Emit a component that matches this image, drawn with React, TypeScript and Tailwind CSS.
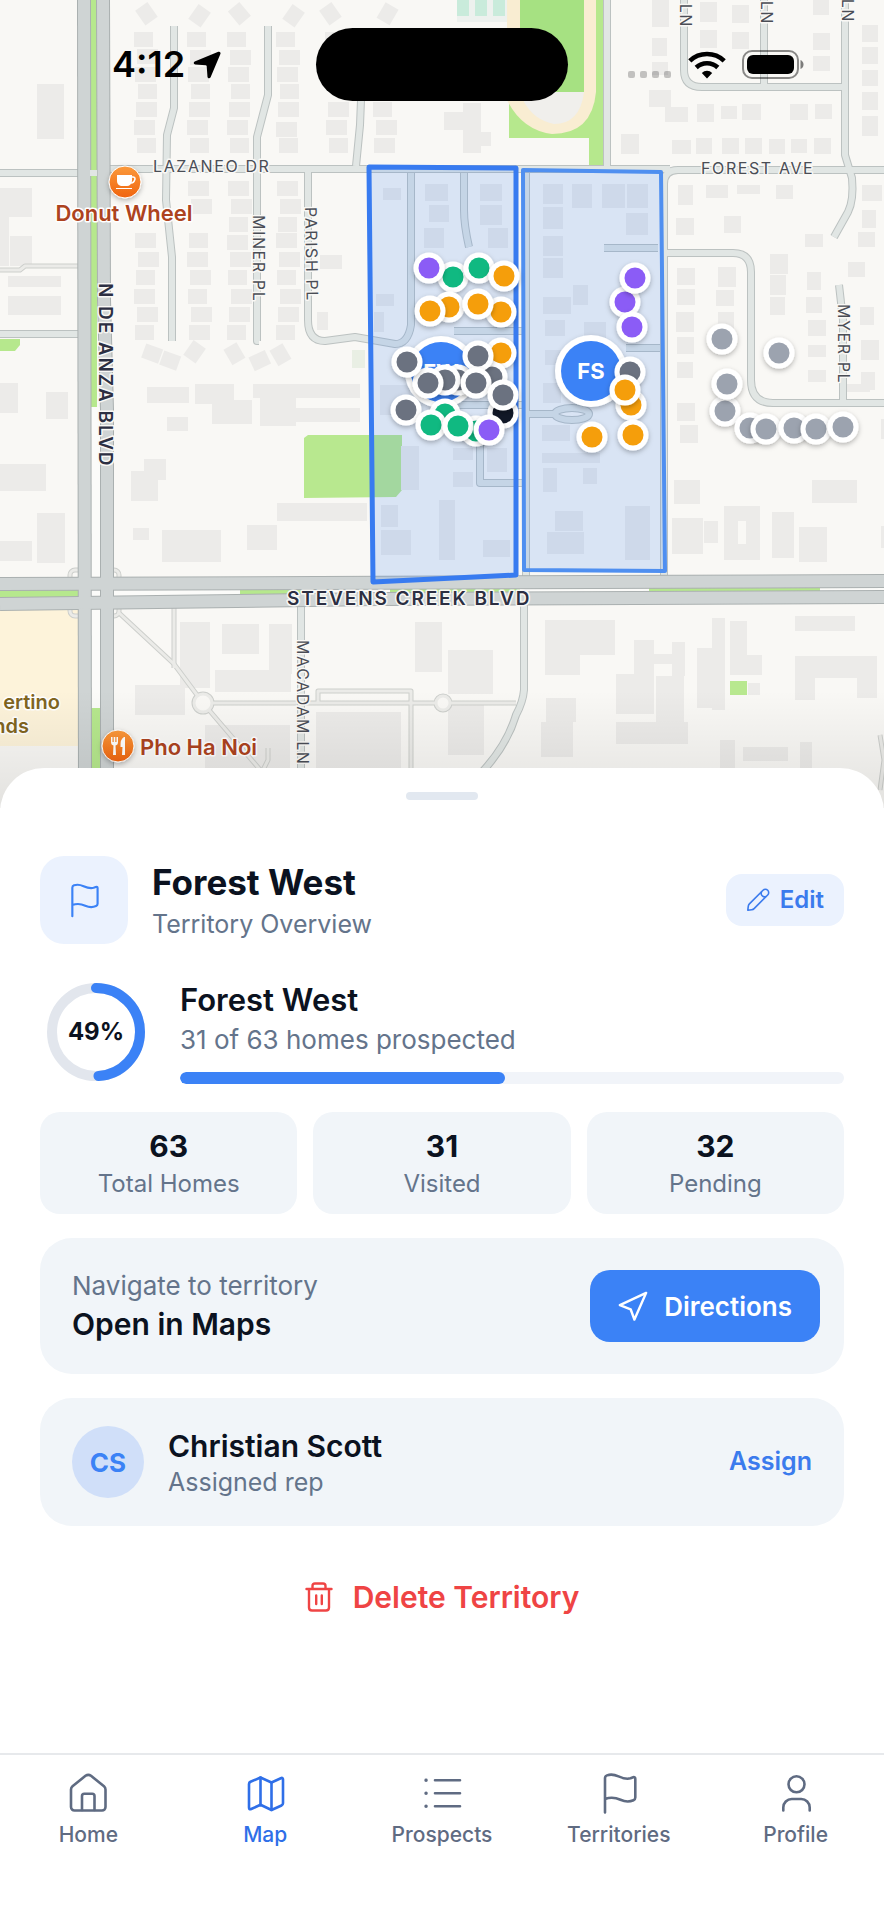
import type { ReactNode } from "react";

// x, y, width, height of every building footprint on the map
const BUILDINGS = [
  [37, 84, 27, 55], [0, 188, 32, 29], [10, 236, 22, 30], [0, 217, 9, 49], [8, 276, 53, 11], [8, 296, 53, 19],
  [320, 255, 22, 14], [317, 312, 11, 18], [0, 383, 18, 30], [46, 392, 22, 27], [0, 464, 46, 27],
  [37, 513, 28, 50], [0, 541, 32, 20], [147, 387, 42, 16], [167, 417, 21, 14], [195, 384, 39, 20],
  [212, 400, 40, 24], [253, 384, 107, 14], [260, 398, 36, 28], [296, 408, 64, 14], [131, 471, 27, 30], [144, 459, 22, 21],
  [162, 530, 59, 32], [247, 525, 30, 25], [277, 503, 90, 18], [133, 528, 16, 12], [180, 622, 30, 66],
  [222, 624, 37, 30], [269, 624, 23, 50], [215, 670, 76, 22], [135, 685, 50, 30], [415, 622, 27, 50],
  [316, 712, 85, 60], [205, 725, 85, 45], [383, 188, 18, 12], [425, 184, 23, 17], [429, 205, 20, 17],
  [424, 228, 20, 20], [480, 184, 22, 17], [480, 205, 22, 20], [488, 228, 20, 20], [376, 294, 18, 12],
  [374, 312, 10, 20], [380, 385, 30, 30], [401, 446, 18, 44], [381, 505, 17, 22], [381, 530, 30, 25],
  [439, 500, 16, 60], [483, 540, 27, 17], [453, 472, 20, 15], [453, 448, 20, 12], [487, 448, 20, 24], [543, 184, 20, 20], [572, 184, 20, 24],
  [602, 184, 23, 24], [627, 184, 21, 24], [543, 207, 20, 22], [626, 213, 22, 22], [543, 236, 20, 20],
  [543, 258, 20, 20], [573, 285, 15, 20], [543, 297, 28, 17], [545, 320, 20, 16], [584, 322, 22, 16],
  [545, 350, 18, 15], [543, 383, 18, 20], [542, 425, 28, 16], [542, 453, 58, 10], [543, 468, 14, 24],
  [583, 468, 14, 16], [555, 511, 28, 20], [547, 532, 37, 22], [625, 506, 25, 54], [678, 185, 15, 20],
  [706, 185, 22, 13], [737, 185, 23, 9], [776, 185, 17, 14], [676, 218, 18, 17], [724, 216, 17, 17],
  [677, 268, 18, 17], [677, 289, 18, 16], [676, 312, 18, 20], [677, 337, 17, 17], [677, 362, 16, 16],
  [718, 267, 18, 20], [716, 290, 18, 16], [718, 312, 16, 18], [770, 254, 18, 20], [770, 275, 16, 20],
  [770, 297, 15, 18], [805, 234, 18, 13], [807, 272, 14, 18], [806, 297, 16, 16], [808, 320, 18, 16],
  [808, 345, 18, 12], [808, 370, 18, 12], [862, 185, 20, 16], [862, 210, 14, 18], [858, 232, 17, 15], [848, 262, 17, 15], [860, 307, 14, 18],
  [861, 340, 18, 20], [861, 372, 14, 18], [652, 0, 17, 27], [652, 38, 15, 18], [652, 62, 16, 13],
  [649, 90, 22, 17], [665, 107, 23, 15], [697, 104, 17, 18], [721, 106, 16, 13], [742, 104, 19, 16],
  [790, 104, 18, 16], [815, 104, 17, 15], [621, 134, 18, 20], [672, 140, 19, 14], [696, 138, 16, 16],
  [722, 138, 17, 16], [745, 138, 17, 16], [769, 139, 16, 15], [791, 139, 16, 14], [814, 138, 17, 16],
  [700, 2, 17, 20], [700, 30, 17, 18], [732, 5, 17, 18], [732, 32, 17, 17], [813, 0, 16, 15],
  [813, 33, 17, 17], [813, 56, 17, 15], [862, 25, 16, 17], [862, 47, 16, 17], [862, 70, 16, 16],
  [862, 92, 16, 18], [862, 116, 16, 20], [463, 103, 18, 50], [444, 112, 19, 18], [481, 132, 10, 14],
  [674, 480, 26, 24], [672, 518, 31, 36], [704, 521, 14, 22], [724, 506, 14, 54], [746, 506, 14, 54],
  [738, 506, 8, 15], [738, 544, 8, 16], [772, 512, 22, 46], [812, 480, 45, 23], [799, 527, 28, 35],
  [677, 403, 18, 18], [680, 425, 18, 18], [840, 384, 30, 8], [545, 620, 70, 35], [545, 655, 35, 20], [634, 640, 20, 34],
  [672, 642, 13, 34], [648, 654, 24, 10], [616, 674, 38, 40], [656, 676, 28, 46], [616, 722, 72, 22],
  [712, 618, 13, 92], [697, 648, 15, 60], [730, 621, 17, 54], [747, 655, 15, 20], [748, 683, 12, 12],
  [795, 616, 60, 15], [795, 656, 20, 44], [815, 656, 42, 22], [857, 656, 20, 42], [546, 698, 30, 24],
  [541, 722, 32, 35], [720, 740, 15, 30], [743, 747, 45, 14], [800, 742, 12, 28], [448, 650, 45, 44],
  [448, 705, 36, 50], [881, 419, 10, 20], [881, 526, 10, 22],
];

// Rows of houses along the north-south streets
const HOUSE_COLUMNS = [
  { x: 134, rows: [32, 49, 67, 84, 102, 120, 138, 233, 252, 270, 289, 307, 325] },
  { x: 187, rows: [32, 50, 67, 84, 102, 120, 138, 181, 199, 233, 252, 270, 289, 307, 325] },
  { x: 227, rows: [32, 50, 67, 84, 102, 120, 138, 181, 199, 217, 235, 252, 270, 289, 307, 325] },
  { x: 276, rows: [32, 50, 67, 84, 102, 122, 138, 181, 199, 217, 233, 252, 270, 289, 307, 325] },
  { x: 325, rows: [32, 102, 120, 138] },
  { x: 373, rows: [102, 120, 138] },
];

// Corner houses turned to face the ends of the streets: cx, cy, angle
const CORNER_HOUSES = [
  [146, 14, 55], [200, 16, -55], [239, 14, 50], [294, 16, -55], [330, 14, 55], [388, 14, -60],
  [152, 354, 20], [170, 361, 20], [195, 352, -55], [234, 354, 60], [260, 361, -25], [280, 355, 60],
];

const STREETS = [
  "M0 173H78", "M109 169H670", "M664 575V184Q664 170 678 170H884",
  "M174 26V108L167 135L166 200L172 257V341", "M268 26V95L257 137V341H259",
  "M361 100L360 125L356 166", "M308 171V320Q308 341 325 341L355 337L395 344Q408 344 411 325L411 173",
  "M464 173V210Q464 225 469 247", "M607 0V168", "M684 0V70Q684 87 702 87H845", "M764 0V87",
  "M845 0V155L852 178Q854 200 848 212L834 237", "M604 248H658", "M666 253H733Q751 253 751 272V380Q751 403 773 403H884",
  "M839 285L843 320V403", "M526 173V576", "M524 604V690Q523 702 516 715Q507 745 482 772",
  "M454 331H523", "M626 348H660", "M529 414H556", "M480 440V483H523", "M440 405H522",
  "M301 604V800", "M0 334H78",
];

const PATHS = [
  "M118 612L174 664L203 703L262 772", "M174 608V668", "M203 703H516", "M318 702V691H411V800",
  "M0 270H20L25 266H78", "M262 772L268 760V748", "M880 735L884 760L880 790",
];

const PIN = {
  purple: "#8b5cf6",
  green: "#10b981",
  orange: "#f59e0b",
  slate: "#6b7280",
  black: "#111827",
  gray: "#9ca3af",
};

const PINS: [number, number, keyof typeof PIN][] = [
  [453, 277, "green"], [429, 268, "purple"], [479, 268, "green"], [504, 276, "orange"],
  [449, 307, "orange"], [430, 311, "orange"], [501, 312, "orange"], [478, 304, "orange"],
  [501, 353, "orange"], [492, 377, "slate"], [458, 380, "slate"], [445, 380, "slate"],
  [428, 383, "slate"], [407, 362, "slate"], [478, 356, "slate"], [476, 383, "slate"],
  [503, 413, "black"], [503, 395, "slate"], [406, 410, "slate"], [445, 414, "green"],
  [431, 425, "green"], [476, 431, "green"], [458, 426, "green"], [489, 430, "purple"],
  [625, 302, "purple"], [635, 278, "purple"], [632, 327, "purple"], [630, 372, "slate"],
  [631, 405, "orange"], [625, 390, "orange"], [592, 437, "orange"], [633, 435, "orange"],
  [722, 339, "gray"], [779, 353, "gray"], [725, 411, "gray"], [727, 384, "gray"],
  [750, 428, "gray"], [766, 429, "gray"], [794, 428, "gray"], [816, 429, "gray"], [843, 427, "gray"],
];

function TerritoryBadge({ x, y, label }: { x: number; y: number; label: string }) {
  return (
    <g>
      <circle cx={x} cy={y} r={36} fill="#fff" filter="url(#pin-shadow)" />
      <circle cx={x} cy={y} r={30} fill="#3b82f6" />
      <text x={x} y={y + 8} textAnchor="middle" className="fill-white text-[22px] font-bold">{label}</text>
    </g>
  );
}

function TerritoryMap() {
  return (
    <svg
      viewBox="0 0 884 808"
      preserveAspectRatio="xMidYMin slice"
      className="block h-[808px] w-full bg-[#f9f8f5]"
      role="img"
      aria-label="Territory map"
    >
      <defs>
        <linearGradient id="poi" x1="0" y1="0" x2="0" y2="1">
          <stop offset="0" stopColor="#fb9a3c" />
          <stop offset="1" stopColor="#f0640f" />
        </linearGradient>
        <linearGradient id="sheet-shade" x1="0" y1="0" x2="0" y2="1">
          <stop offset="0" stopColor="#000" stopOpacity="0" />
          <stop offset="1" stopColor="#000" stopOpacity="0.09" />
        </linearGradient>
        <filter id="pin-shadow" x="-30%" y="-30%" width="160%" height="170%">
          <feDropShadow dx="0" dy="2" stdDeviation="2.5" floodOpacity="0.28" />
        </filter>
      </defs>

      {/* Land use */}
      <path d="M0 610H79V746H0Z" fill="#fdf3da" />
      <path d="M0 339H20V345L15 351H0Z" fill="#b6e88d" />
      <path d="M509 0H604V167H589V138H509Z" fill="#b6e88d" />
      <path d="M507 0H596V92Q592 134 552 134Q522 130 507 100Z" fill="#f9edd2" />
      <path d="M520 0H584V92H520Z" fill="#a6e182" />
      <path d="M524 92H584Q580 124 554 124Q534 120 524 102Z" fill="#f0efec" />
      <path d="M457 0H507V22H457Z" fill="#edf1ee" />
      <path d="M457 0H469V16H457ZM475 0H487V16H475ZM493 0H505V16H493Z" fill="#c9ebdb" />
      <path d="M304 438L308 435H402V490L396 497L304 498Z" fill="#b8e88f" />

      <g fill="#ecebe9">
        {BUILDINGS.map(([x, y, width, height]) => (
          <rect key={`${x}-${y}`} x={x} y={y} width={width} height={height} />
        ))}
        {HOUSE_COLUMNS.map((column) =>
          column.rows.map((y, i) => (
            <rect key={`${column.x}-${y}`} x={column.x + ((i * 3) % 5)} y={y} width={i % 3 ? 21 : 19} height={15} />
          ))
        )}
        {CORNER_HOUSES.map(([x, y, angle]) => (
          <rect key={`${x}-${y}`} x={x - 9} y={y - 8} width={18} height={15} transform={`rotate(${angle} ${x} ${y})`} />
        ))}
      </g>
      <rect x={730} y={681} width={17} height={14} fill="#b8e88f" />
      <rect x={352} y={350} width={13} height={18} fill="#e9efe4" />

      {/* Side streets */}
      <g fill="none" strokeLinejoin="round">
        <g stroke="#cdcfcc" strokeWidth={5}>
          {PATHS.map((d) => <path key={d} d={d} />)}
          <circle cx={203} cy={703} r={9} />
          <circle cx={443} cy={703} r={7} />
          <rect x={70} y={570} width={49} height={46} rx={5} />
        </g>
        <g stroke="#ebebe8" strokeWidth={3}>
          {PATHS.map((d) => <path key={d} d={d} />)}
          <circle cx={203} cy={703} r={9} fill="#f9f8f5" />
          <circle cx={443} cy={703} r={7} fill="#f9f8f5" />
          <rect x={70} y={570} width={49} height={46} rx={5} />
        </g>
        <g stroke="#bcc2c1" strokeWidth={8}>
          {STREETS.map((d) => <path key={d} d={d} />)}
          <ellipse cx={572} cy={414} rx={17} ry={6} />
        </g>
        <g stroke="#e1e6e4" strokeWidth={6}>
          {STREETS.map((d) => <path key={d} d={d} />)}
          <ellipse cx={572} cy={414} rx={17} ry={6} />
        </g>
      </g>

      {/* Boulevards with their medians */}
      <path d="M90 0H97V407H91Z" fill="#b6e88d" />
      <path d="M91 407H100V577H91Z" fill="#fbfbf9" />
      <path d="M91 609H101V708H91Z" fill="#fbfbf9" />
      <path d="M91 708H101V808H91Z" fill="#b6e88d" />
      <path d="M0 590L884 586V594L0 598Z" fill="#fbfbf9" />
      <path d="M0 590H79V598H0ZM240 589H310V596H240ZM390 588H520V594H390ZM649 587H820V593H649Z" fill="#b6e88d" />
      <g fill="none">
        <g stroke="#aab0b0" strokeWidth={14}>
          <path d="M84 0L85 808" />
          <path d="M103 0L104 300L107 410V808" />
          <path d="M0 584L884 581" />
          <path d="M0 604L380 599L884 597" />
        </g>
        <g stroke="#cfd4d4" strokeWidth={12}>
          <path d="M84 0L85 808" />
          <path d="M103 0L104 300L107 410V808" />
          <path d="M0 584L884 581" />
          <path d="M0 604L380 599L884 597" />
        </g>
      </g>
      <path d="M90 173H97" stroke="#e1e6e4" strokeWidth={6} />

      {/* Territories */}
      <g fill="#3b82f6" fillOpacity={0.17} strokeLinejoin="round">
        <path d="M523 170L661 172L665 571L524 570Z" stroke="#4f8ff0" strokeWidth={4} />
        <path d="M369 167L516 168V575L373 582Z" stroke="#387bf0" strokeWidth={5} />
      </g>

      {/* Street names */}
      <g className="fill-[#4a4d55] text-[16px] tracking-widest" stroke="#f9f8f5" strokeWidth={3} paintOrder="stroke" strokeLinejoin="round">
        <text x={153} y={172}>LAZANEO DR</text>
        <text x={701} y={174}>FOREST AVE</text>
        <text transform="translate(253 215) rotate(90)">MINER PL</text>
        <text transform="translate(305 207) rotate(89)">PARISH PL</text>
        <text transform="translate(838 304) rotate(90)">MYER PL</text>
        <text transform="translate(297 640) rotate(90)">MACADAM LN</text>
        <text transform="translate(680 28) rotate(90)" textAnchor="end">LN</text>
        <text transform="translate(761 25) rotate(90)" textAnchor="end">LN</text>
        <text transform="translate(842 23) rotate(90)" textAnchor="end">LN</text>
      </g>
      <g className="fill-[#2c2f42] text-[19px] font-semibold tracking-widest" stroke="#f9f8f5" strokeWidth={3} paintOrder="stroke" strokeLinejoin="round">
        <text x={287} y={605}>STEVENS CREEK BLVD</text>
        <text transform="translate(99 283) rotate(90)">N DE ANZA BLVD</text>
      </g>

      {/* Places */}
      <g className="fill-[#ad4320] text-[22px] font-semibold" stroke="#fff" strokeWidth={3} paintOrder="stroke" strokeLinejoin="round">
        <text x={124} y={221} textAnchor="middle">Donut Wheel</text>
        <text x={140} y={755}>Pho Ha Noi</text>
      </g>
      <g className="fill-[#80651f] text-[20px] font-semibold" stroke="#fff" strokeWidth={3} paintOrder="stroke" strokeLinejoin="round">
        <text x={60} y={709} textAnchor="end">ertino</text>
        <text x={29} y={733} textAnchor="end">nds</text>
      </g>
      <g filter="url(#pin-shadow)">
        <circle cx={125} cy={182} r={16} fill="url(#poi)" stroke="#fff" strokeWidth={1} />
        <circle cx={118} cy={746} r={16} fill="url(#poi)" stroke="#fff" strokeWidth={1} />
      </g>
      <path d="M117 175H132V181Q131 186 127 186H121Q117 185 117 181ZM116 188H132V189H116Z" fill="#fff" />
      <path d="M132 177H133Q135 177 135 179Q134 183 131 183" fill="none" stroke="#fff" strokeWidth={1.5} />
      <path d="M111 737V742Q111 745 113.5 745.5L113 755H116L115.5 745.5Q118 745 118 742V737H116.5V742H115.3V737H113.7V742H112.5V737ZM124 737Q120 739 120.5 747H122.5L122 755H125V737Z" fill="#fff" />

      <TerritoryBadge x={441} y={372} label="FW" />
      <TerritoryBadge x={591} y={371} label="FS" />
      {PINS.map(([x, y, color]) => (
        <g key={`${x}-${y}`}>
          <circle cx={x} cy={y} r={15.5} fill="#fff" filter="url(#pin-shadow)" />
          <circle cx={x} cy={y} r={10.5} fill={PIN[color]} />
        </g>
      ))}

      <rect x={0} y={690} width={884} height={118} fill="url(#sheet-shade)" />
    </svg>
  );
}

function StatusBar() {
  return (
    <div className="absolute inset-x-0 top-0 grid grid-cols-[1fr_auto_1fr] items-center px-20 pt-7 text-black">
      <div className="flex items-center gap-2 pl-8">
        <span className="text-[36px] leading-[73px] font-semibold">4:12</span>
        <svg width="28" height="28" viewBox="0 0 28 28" fill="currentColor" aria-hidden="true">
          <path d="M25.3.8C26.8.2 28 1.4 27.4 2.9L17.6 26.2C17 27.7 14.8 27.5 14.5 25.9L13.7 15.2C13.6 14.6 13.3 14.3 12.7 14.2L2.2 13.5C.5 13.3.2 11.2 1.7 10.5Z" />
        </svg>
      </div>
      <div className="h-[73px] w-[252px] rounded-full bg-black" />
      <div className="flex items-center justify-end gap-4">
        <svg width="44" height="28" viewBox="0 0 44 28" fill="#000" fillOpacity={0.22} aria-hidden="true">
          <rect x="0" y="20" width="7" height="7" rx="2" />
          <rect x="12" y="20" width="7" height="7" rx="2" />
          <rect x="24" y="20" width="7" height="7" rx="2" />
          <rect x="36" y="20" width="7" height="7" rx="2" />
        </svg>
        <svg width="38" height="28" viewBox="0 0 38 28" fill="none" stroke="currentColor" strokeWidth={4.6} aria-hidden="true">
          <path d="M1.8 9.8Q9 3 19 3T36.2 9.8" />
          <path d="M8.2 16.5Q12.8 12.2 19 12.2T29.8 16.5" />
          <path d="M19 27.5L13.8 22Q16 19.8 19 19.8T24.2 22Z" fill="currentColor" stroke="none" />
        </svg>
        <svg width="62" height="29" viewBox="0 0 62 29" aria-hidden="true">
          <rect x="1" y="1" width="55" height="27" rx="9" fill="none" stroke="#000" strokeOpacity={0.45} strokeWidth={2} />
          <rect x="5" y="5" width="47" height="19" rx="6" />
          <path d="M58.5 10Q61.5 11.5 61.5 14.5T58.5 19Z" fillOpacity={0.5} />
        </svg>
      </div>
    </div>
  );
}

function Icon({ size = 48, children }: { size?: number; children: ReactNode }) {
  return (
    <svg
      width={size}
      height={size}
      viewBox="0 0 48 48"
      fill="none"
      stroke="currentColor"
      strokeWidth={2.6}
      strokeLinecap="round"
      strokeLinejoin="round"
      aria-hidden="true"
    >
      {children}
    </svg>
  );
}

const flagPath = (
  <path d="M10 43.5V9.2C10 7.7 10.7 6.9 12 6.4C15.5 5.1 19.5 5.6 23.5 7.4C28 9.4 31.5 10.4 35.5 9.3L38.2 8.3C39.3 7.9 40.3 8.5 40.3 9.7V28.5C40.3 29.8 39.7 30.7 38.5 31.2C34.5 33 29.5 32.6 25.5 30.8C20.5 28.5 16 27.8 10 30" />
);

const TABS = [
  {
    label: "Home",
    icon: (
      <>
        <path d="M7 20.5V38A3.5 3.5 0 0 0 10.5 41.5H38A3.5 3.5 0 0 0 41.5 38V20.5Q41.5 18.6 40 17.3L27 6.8Q24.3 4.8 21.5 6.8L8.5 17.3Q7 18.6 7 20.5Z" />
        <path d="M18 41V27A2.3 2.3 0 0 1 20.3 24.7H28.2A2.3 2.3 0 0 1 30.5 27V41" />
      </>
    ),
  },
  {
    label: "Map",
    active: true,
    icon: (
      <>
        <path d="M19.5 8.5L9.5 12.8Q8 13.5 8 15V38.5Q8 41 10.2 40L19.5 35.8L30.5 41L40.5 36.5Q42 35.8 42 34.3V10.5Q42 8.2 39.8 9.2L30.5 13.5Z" />
        <path d="M19.5 8.5V35.8M30.5 13.5V41" />
      </>
    ),
  },
  {
    label: "Prospects",
    icon: (
      <>
        <path d="M17 11.3H42M17 24.3H42M17 37.3H42" />
        <path d="M8 11.3H8.1M8 24.3H8.1M8 37.3H8.1" strokeWidth={3.4} />
      </>
    ),
  },
  { label: "Territories", icon: flagPath },
  {
    label: "Profile",
    icon: (
      <>
        <circle cx="24.5" cy="15.3" r="8" />
        <path d="M11.3 41.5V38.5A8.5 8.5 0 0 1 19.8 30H29.2A8.5 8.5 0 0 1 37.7 38.5V41.5" />
      </>
    ),
  },
];

const STATS = [
  { value: 63, label: "Total Homes" },
  { value: 31, label: "Visited" },
  { value: 32, label: "Pending" },
];

function ProgressRing({ percent }: { percent: number }) {
  const circumference = 2 * Math.PI * 44;
  return (
    <div className="relative flex size-28 shrink-0 items-center justify-center">
      <svg viewBox="0 0 112 112" className="absolute inset-0 -rotate-90" fill="none" strokeWidth={10} aria-hidden="true">
        <circle cx="56" cy="56" r="44" stroke="#e2e6ed" />
        <circle
          cx="56"
          cy="56"
          r="44"
          stroke="#3b82f6"
          strokeLinecap="round"
          strokeDasharray={`${(circumference * percent) / 100} ${circumference}`}
        />
      </svg>
      <span className="relative text-2xl font-bold text-[#0b1220]">{percent}%</span>
    </div>
  );
}

export default function App() {
  const visited = 31;
  const total = 63;
  const percent = Math.round((visited / total) * 100);

  return (
    <div className="flex min-h-screen flex-col bg-white font-[Inter,sans-serif]">
      <header className="relative">
        <TerritoryMap />
        <StatusBar />
      </header>

      {/* Bottom sheet */}
      <main className="relative -mt-10 flex flex-1 flex-col rounded-t-[44px] bg-white px-10 pt-6 text-[#0b1220]">
        <div className="mx-auto h-2 w-[72px] rounded-full bg-[#e2e8f0]" />

        <div className="mt-14 flex items-center gap-6">
          <div className="flex size-[88px] items-center justify-center rounded-3xl bg-[#ebf2fe] text-[#3b82f6]">
            <Icon size={40}>{flagPath}</Icon>
          </div>
          <div className="flex-1 pt-1">
            <h1 className="text-[35px] leading-[44px] font-bold">Forest West</h1>
            <p className="text-[25px] leading-10 text-[#64748b]">Territory Overview</p>
          </div>
          <button type="button" className="flex h-13 items-center gap-2.5 rounded-2xl bg-[#ebf2fe] px-5 text-2xl font-semibold text-[#3b7bed]">
            <svg width="24" height="24" viewBox="0 0 24 24" fill="none" stroke="currentColor" strokeWidth={1.6} strokeLinejoin="round" aria-hidden="true">
              <path d="M1.8 22.2L2.3 18.2Q2.5 16.8 3.4 15.9L17 2.3A2.9 2.9 0 0 1 21.7 7L8.1 20.6Q7.2 21.5 5.8 21.7Z" />
              <path d="M15.6 3.8A3.4 3.4 0 0 0 20.2 8.4" />
            </svg>
            Edit
          </button>
        </div>

        <section className="mt-8 flex items-center gap-7">
          <ProgressRing percent={percent} />
          <div className="flex-1">
            <h2 className="text-[31px] leading-10 font-semibold">Forest West</h2>
            <p className="text-[26px] leading-10 text-[#64748b]">{visited} of {total} homes prospected</p>
            <div className="mt-3 h-3 overflow-hidden rounded-full bg-[#f1f4f9]">
              <div className="h-full rounded-full bg-[#3b82f6]" style={{ width: `${percent}%` }} />
            </div>
          </div>
        </section>

        <section className="mt-6 grid grid-cols-3 gap-4">
          {STATS.map((stat) => (
            <div key={stat.label} className="rounded-[20px] bg-[#f1f5f9] pt-4 pb-2.5 text-center">
              <div className="text-[30px] leading-9 font-bold">{stat.value}</div>
              <div className="text-2xl leading-10 text-[#64748b]">{stat.label}</div>
            </div>
          ))}
        </section>

        <section className="mt-6 flex items-center justify-between rounded-[32px] bg-[#f1f5f9] py-7 pr-6 pl-8">
          <div className="pb-1">
            <p className="text-[26px] leading-10 text-[#64748b]">Navigate to territory</p>
            <p className="text-[30px] leading-9 font-semibold">Open in Maps</p>
          </div>
          <button type="button" className="flex h-18 items-center gap-4 rounded-[20px] bg-[#3b82f6] px-7 text-[26px] font-semibold text-white">
            <svg width="30" height="30" viewBox="0 0 32 32" fill="none" stroke="currentColor" strokeWidth={2.6} strokeLinejoin="round" aria-hidden="true">
              <path d="M30 2L2 15L13.5 19.5L17.5 30.5Z" />
            </svg>
            Directions
          </button>
        </section>

        <section className="mt-6 flex items-center gap-6 rounded-[32px] bg-[#f1f5f9] px-8 py-[26px]">
          <div className="flex size-18 items-center justify-center rounded-full bg-[#d0dff9] text-[26px] font-bold text-[#3b82f6]">CS</div>
          <div className="flex-1 pt-1">
            <p className="text-[30px] leading-9 font-semibold">Christian Scott</p>
            <p className="text-[25px] leading-9 text-[#64748b]">Assigned rep</p>
          </div>
          <button type="button" className="text-[25px] font-semibold text-[#3b7bed]">Assign</button>
        </section>

        <button type="button" className="mx-auto mt-9 flex h-[70px] items-center gap-5 text-[30px] font-semibold text-[#ef4444]">
          <svg width="28" height="30" viewBox="0 0 28 30" fill="none" stroke="currentColor" strokeWidth={2.4} strokeLinecap="round" strokeLinejoin="round" aria-hidden="true">
            <path d="M1.5 7H26.5M7.5 7V4Q7.5 1.5 10 1.5H18Q20.5 1.5 20.5 4V7M4 7V25.5Q4 28.5 7 28.5H21Q24 28.5 24 25.5V7M11.2 13.5V22M16.8 13.5V22" />
          </svg>
          Delete Territory
        </button>
      </main>

      <nav className="relative grid grid-cols-5 border-t-2 border-[#e7e9ec] bg-white pt-3.5 pb-[71px]">
        {TABS.map((tab) => (
          <a
            key={tab.label}
            href={`#${tab.label.toLowerCase()}`}
            aria-current={tab.active ? "page" : undefined}
            className={`flex flex-col items-center gap-1 text-[21px] leading-7 font-medium ${tab.active ? "text-[#2f6fe8]" : "text-[#5f6b82]"}`}
          >
            <Icon>{tab.icon}</Icon>
            {tab.label}
          </a>
        ))}
      </nav>
    </div>
  );
}
